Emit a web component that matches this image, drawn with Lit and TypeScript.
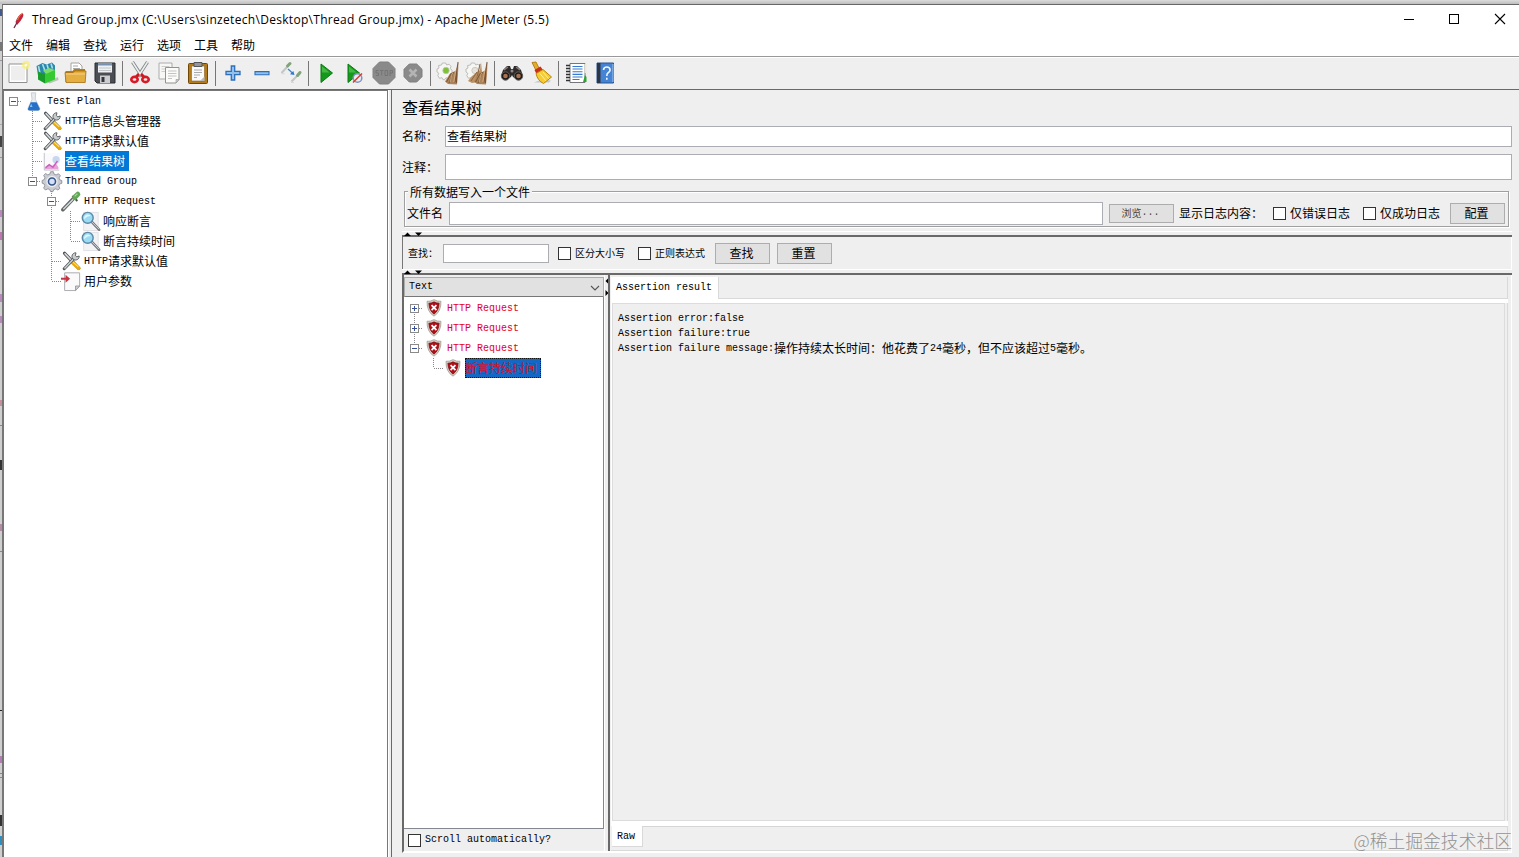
import { LitElement, html, css, svg, nothing } from "lit";
import { customElement, property } from "lit/decorators.js";

/* Shared typography: 10px mono for Latin glyphs, 12px for Chinese glyphs. */
const shared = css`
  * { box-sizing: border-box; }
  .lat { font-family: "Liberation Mono", monospace; font-size: 10px; letter-spacing: 0; white-space: pre; position: relative; top: -2px; }
  .cjk { font-family: "Noto Sans CJK SC", sans-serif; font-size: 12px; white-space: pre; }
`;

const mixed = (text: string) =>
  (text.match(/[\x20-\x7e]+|[^\x20-\x7e]+/g) ?? []).map(
    (part) => html`<span class=${/^[\x20-\x7e]/.test(part) ? "lat" : "cjk"}>${part}</span>`
  );

const wrench = svg`
  <path d="M4 2.5 L19.5 19" stroke="#4e5256" stroke-width="3.6" stroke-linecap="round"/>
  <path d="M4 2.5 L12 11" stroke="#d9dcdc" stroke-width="1.8"/>
  <path d="M12.5 12.5 L19.5 19" stroke="#e9a90d" stroke-width="4" stroke-linecap="round"/>
  <path d="M13 12 L19 17.5" stroke="#ffe069" stroke-width="1.2"/>
  <path d="M3.5 19.5 L15.5 7" stroke="#55595c" stroke-width="3.4" stroke-linecap="round"/>
  <path d="M3.8 19.2 L15.5 7" stroke="#cdd1d2" stroke-width="1.6"/>
  <path d="M20 5.5 A4 4 0 1 1 16.5 2 L15.8 5 L17.4 6.4 Z" fill="#c9cdce" stroke="#55595c" stroke-width="1"/>`;

const lens = svg`
  <path d="M4 1.5h16v20h-16z" fill="#f3f3f6" stroke="#d8d8de" stroke-width=".8"/>
  <path d="M13 12 L21 20.5" stroke="#777b80" stroke-width="3" stroke-linecap="round"/>
  <path d="M13 12 L21 20" stroke="#d5d8db" stroke-width="1"/>
  <circle cx="8.5" cy="7.5" r="6" fill="#9bdcf5" stroke="#5d89a8" stroke-width="1.6"/>
  <path d="M4.5 7 A4.2 4.2 0 0 1 12 5.5 Q8 5 4.5 9z" fill="#dff6ff"/>`;

const broom = (n: number) => svg`
  <path d="M2.5 4.5l3-.5.8-2h3.4l1 2 2.3-.8 2 2.2-.8 2.2 1.8 1.4v3.4l-2 .9.6 2.4-2.4 2-2.2-1-1.5 2H7l-1-2-2.5.6L1.800 14.500l1-2.200-1.800-1.300V8l2-1z" fill="#f6f6f4" stroke="#b5b5b1" stroke-width=".9"/>
  <circle cx="10" cy="9.500" r="3.200" fill=${n ? "#e4e2de" : "#7cc234"} stroke="#c4c4b8" stroke-width=".8"/>
  ${n ? svg`<path d="M16 1l-1 8-8 6-4 5 4 2 7-1 3-9z" fill="#bb9265"/><path d="M15 3l-4 18M12 11l-6 9" stroke="#8a6440" stroke-width="1"/>` : nothing}
  <path d="M22.500.5l-2.500 9-6 3-5 8 3 2.500 9 .5 1-10z" fill="#ad835a"/>
  <path d="M22 1l-3 20.500M17.500 11l-4.500 11M15.500 12l-5 9M20.500 11v11" stroke="#75502f" stroke-width=".9"/>
  <path d="M16.500 12l-2.500 9M19.800 9l-2 12" stroke="#dfbd93" stroke-width=".7"/>`;

const icons: Record<string, unknown> = {
  new: svg`<path d="M3 3h18v18.500H3z" fill="#fff" stroke="#8f9190"/><path d="M5 5h14v14.500H5z" fill="#eeeeef"/><circle cx="20" cy="4" r="4.200" fill="#f8ee77" opacity=".75"/><circle cx="20" cy="4" r="1.500" fill="#fffde0"/>`,
  templates: svg`<path d="M12 21l11-5 .5 3-9 3.500z" fill="#b9c4b9"/><path d="M1.500 5l6-3 4 1.500L17 1.500l3 3v9l-9 6-8-5z" fill="#2d86ab"/><path d="M3.500 5l2 10M7.500 3l2.500 7M12 3.500l1.500 5M16 2.500l1.500 5" stroke="#a8dfe9" stroke-width="1.600"/><path d="M3 10.500l7 2.500v9.500l-7-4z" fill="#199b2c"/><path d="M10 13l10-4v9.500l-10 4z" fill="#35ca32"/><path d="M8 9.500l6-2.500 6 2-9 4z" fill="#7adf67"/>`,
  open: svg`<path d="M7 2h8l3 3v9H7z" fill="#fff" stroke="#a6a39a"/><path d="M9 5h5M9 7.500h7M9 10h7" stroke="#a7a7a3"/><path d="M1.500 10h7l1.500-2h11v13h-19.500z" fill="#b87c12"/><path d="M1 11.500h8l2-1.500h11l-.8 11.500H2z" fill="#e5ae40" stroke="#a66f10" stroke-width=".8"/><path d="M2 13h19" stroke="#f7d285"/>`,
  save: svg`<path d="M2 2h20v20H4l-2-2z" fill="#4b4e53" stroke="#2b2d30"/><path d="M5 2.500h14v9H5z" fill="#eef0f2"/><path d="M5 2.500h14v2H5z" fill="#7692b3"/><path d="M6 7h12M6 9.500h12" stroke="#c2c6ca"/><path d="M7 14.500h10V22H7z" fill="#cbcdd0"/><path d="M8.500 16h3v5h-3z" fill="#34363a"/>`,
  cut: svg`<path d="M4.500 1l9.500 14.500M19.500 1L10 15.500" stroke="#84888a" stroke-width="3.200"/><path d="M4.500 1l9 14M19.500 1l-9 14" stroke="#eef0f0" stroke-width="1.500"/><path d="M11 13l-3 3M13 13l3 3" stroke="#cf1823" stroke-width="3"/><ellipse cx="6.500" cy="18.500" rx="3.200" ry="2.600" fill="#eee" stroke="#d61a26" stroke-width="2.600"/><ellipse cx="17.500" cy="18.500" rx="3.200" ry="2.600" fill="#eee" stroke="#d61a26" stroke-width="2.600"/>`,
  copy: svg`<path d="M2 2h13v16H2z" fill="#f7f7f6" stroke="#aaadab"/><path d="M4.500 5.500h8M4.500 8h8M4.500 10.500h4" stroke="#ccc"/><path d="M8.500 6.500h13.500v12l-3 3.500H8.500z" fill="#fbfbfa" stroke="#90938f"/><path d="M11 10h8.500M11 12.500h8.500M11 15h8.500M11 17.500h4" stroke="#c3c4c2"/><path d="M22 18.500h-3V22z" fill="#ccc" stroke="#999" stroke-width=".6"/>`,
  paste: svg`<path d="M3.500 2.500h17a1 1 0 0 1 1 1v18a1 1 0 0 1-1 1h-17a1 1 0 0 1-1-1v-18a1 1 0 0 1 1-1z" fill="#b37b1a" stroke="#704709"/><path d="M5.500 5h13v15h-13z" fill="#fafafa" stroke="#896021" stroke-width=".6"/><path d="M8 1.500h8v4H8z" fill="#94979a" stroke="#55585b"/><path d="M8 9h8M8 11.500h8M8 14h6M8 16.500h3" stroke="#aaa"/><path d="M18.500 15.500L14 20h4.500z" fill="#bbb"/>`,
  plus: svg`<path d="M10.300 5h3.400v5.300H19v3.400h-5.300V19h-3.400v-5.300H5v-3.400h5.300z" fill="#8fc0ee" stroke="#2f6fba" stroke-width="1.300"/>`,
  minus: svg`<path d="M5 10.600h14v3.200H5z" fill="#8fc0ee" stroke="#2f6fba" stroke-width="1.100"/>`,
  toggle: svg`<path d="M2.500 12L9 5M12.500 20.500l7-7" stroke="#c3c6c6" stroke-width="2"/><path d="M8.500 5l2.500-2.500M18.500 14.500l2.500-3" stroke="#7fa476" stroke-width="3" stroke-linecap="round"/><path d="M2 12.800h4M12 21.500h3" stroke="#dadada"/><path d="M9 8l5 4.500" stroke="#3c86d6" stroke-width="1.300"/><path d="M15.500 14l-4.500-.7 3.300-3.300z" fill="#2c78d0"/>`,
  play: svg`<path d="M7 3L18.500 12 7 21.500z" fill="#15991d" stroke="#0a7b12"/><path d="M8 5.200L15.500 11.500H8z" fill="#44b845"/>`,
  playnow: svg`<path d="M5 3L16.500 12 5 21.500z" fill="#15991d" stroke="#0a7b12"/><path d="M6 5.200L13.500 11.500H6z" fill="#44b845"/><circle cx="14.500" cy="17" r="4.300" fill="#e9eaf2" stroke="#7e93c1" stroke-width="1.500"/><path d="M10 21.500l9-9" stroke="#d5382f" stroke-width="1.500"/>`,
  stop: svg`<path d="M7.500 1h9L23 7.500v9L16.500 23h-9L1 16.500v-9z" fill="#8a8a8a" stroke="#808080"/><path d="M6.500 9.500H4V12h2.500v2.500H4M8 9.500h3.500M9.700 9.500v5M13 9.500h2.700v5H13zM18 15V9.500h2.500V12H18" fill="none" stroke="#747474" stroke-width="1"/>`,
  shutdown: svg`<path d="M8.300 3h7.400L21 8.300v7.400L15.700 21H8.300L3 15.700V8.300z" fill="#8a8a8a" stroke="#808080"/><path d="M8.500 8.500l7 7M15.500 8.500l-7 7" stroke="#b4b4b4" stroke-width="2.600"/>`,
  clear: broom(0),
  clearall: broom(1),
  search: svg`<path d="M3 9l4-4h3l1 3h2l1-3h3l4 4 2 6-5 4-5-3-1-2-1 2-5 3-5-4z" fill="#2d2a29"/><path d="M4 9l4-3M20 9l-4-3" stroke="#8b8582" stroke-width="1.300"/><circle cx="5.500" cy="15" r="4.200" fill="#1e1b1b" stroke="#655e5b"/><circle cx="18.500" cy="15" r="4.200" fill="#1e1b1b" stroke="#655e5b"/><circle cx="5.500" cy="15" r="2.300" fill="#a9704e"/><circle cx="18.500" cy="15" r="2.300" fill="#a9704e"/><circle cx="12" cy="10" r="1.500" fill="#8d8986"/>`,
  sweep: svg`<path d="M5 21.500h15l2-2-9-1z" fill="#aaa" opacity=".6"/><path d="M3 1.500l4-.5 3 6-3 2.500z" fill="#e5ac28" stroke="#a87007" stroke-width=".8"/><path d="M5.500 9l6-3.500 2.500 3.500-6.500 4z" fill="#cb2d1e"/><path d="M7 12.500l7-4 8.500 7.500-8 6.500q-6-3-7.500-10z" fill="#f5cc31" stroke="#b88806"/><path d="M11 12.500l6 7.500M14 11l5.500 6.500" stroke="#fff099"/>`,
  log: svg`<path d="M6 2.500h15v19H6z" fill="#fff" stroke="#74787b"/><path d="M20.500 3h2v9h-2z" fill="#e8e8d4"/><path d="M21 14l1.500 2v5H19z" fill="#2ba531"/><path d="M8.500 5.500h10M8.500 8h10M8.500 10.700h10M8.500 13.400h10M8.500 16h10M8.500 18.500h7" stroke="#357ad0" stroke-width="1.100"/><path d="M2 4.500h4M2 7.500h4M2 10.500h4M2 13.500h4M2 16.500h4M2 19.500h4" stroke="#303236" stroke-width="1.300"/>`,
  help: svg`<path d="M4 2h16.500v20H4z" fill="#4584d4" stroke="#2b548c"/><path d="M4 2h3.500v20H4z" fill="#2c3644"/><path d="M20 3v18" stroke="#a7c8ef"/><path d="M10.500 9q.2-3 3.300-3t3.300 3q0 1.600-1.700 2.500T13.800 15M13.800 16.700v2" fill="none" stroke="#f1f6fd" stroke-width="1.600"/>`,
  flask: svg`<path d="M9 2h5l-.5 7 5 10q.5 2.500-2 2.500h-9q-3 0-2-2.500L10 9z" fill="#e7eaed" stroke="#c7cace"/><path d="M8.500 12.500h6.500l3.500 7q0 2-2 2h-9q-2.500 0-2-2z" fill="#236fc9"/><path d="M9 14l-1.500 3.500h3z" fill="#80c1f4"/>`,
  wrench,
  chart: svg`<path d="M2 2.500h18v17.500H2z" fill="#faf9fc"/><path d="M2.500 2v19H19" fill="none" stroke="#b8b8c0" stroke-width=".9"/><path d="M3 18l4-3.500 4 2 4-3.500 3 5v2H3z" fill="#e3a4da"/><circle cx="15.500" cy="9.500" r="4" fill="#c6d8f0"/><path d="M4 18.500l4-3.500 4 3 5-7" fill="none" stroke="#cf5bbb" stroke-width="1.500"/>`,
  gear: svg`<path d="M9.500.8h3l.8 2.700 2.200.8 2.700-1.300 2 2.200-1.500 2.400.8 2.100 2.300.8v3l-2.500.9-.9 2.100 1.300 2.600-2.200 1.800-2.300-1.300-2.300.9-.9 2.200H9.500l-1-2.300-2.100-.8-2.600 1.300-2-2.200 1.300-2.500-.8-2-2.100-.8v-3l2.200-.9.800-2.100-1.300-2.500 2-2.100L6.400 4.300l2.200-.9z" fill="#c9ccd1" stroke="#83878e" stroke-width=".9"/><circle cx="11" cy="11.500" r="5.500" fill="#36558c" stroke="#eceef1" stroke-width="1.500"/><circle cx="11" cy="11.500" r="3" fill="#d4e1f7"/>`,
  dropper: svg`<path d="M2 20.500L14 8" stroke="#606667" stroke-width="4" stroke-linecap="round"/><path d="M2.500 20L14 8.500" stroke="#d6dad9" stroke-width="1.500"/><path d="M12.500 5.500l5.500 5.500" stroke="#475047" stroke-width="2"/><path d="M15 7l3.500-3.500" stroke="#62a657" stroke-width="5.500" stroke-linecap="round"/><path d="M15 6l3-3" stroke="#a5d695" stroke-width="1.300"/>`,
  lens,
  params: svg`<path d="M4 2h16.500v15l-4.500 4.500H4z" fill="#fafafb" stroke="#a5a5aa"/><path d="M20.500 16.500H16v5z" fill="#d2d2d5" stroke="#999"/><path d="M0 8.500h7" stroke="#c93542" stroke-width="2.200"/><path d="M5 4l5 4.500-5 4.500z" fill="#c93542"/>`,
  shield: svg`<path d="M11 .8q4.500 2.500 8.500 2 .5 12.500-8.500 18.200Q2 15.500 2.500 2.800q4 .5 8.500-2z" fill="#d6d1c8" stroke="#99948b" stroke-width=".9"/><path d="M11 3.500q3.300 1.800 6.300 1.600Q17 14 11 18.500 5 14 4.700 5.100 7.700 5.300 11 3.500z" fill="#b30f18" stroke="#6b0c10" stroke-width=".8"/><path d="M8 7.500l6 6M14 7.500l-6 6" stroke="#fff" stroke-width="2.200"/>`,
};

@customElement("jm-icon")
class JmIcon extends LitElement {
  @property() name = "";
  @property({ type: Number }) size = 24;
  static styles = css`:host { display: block; flex: none; line-height: 0; } svg { display: block; overflow: visible; }`;
  render() {
    const box = this.size === 24 ? "0 0 24 24" : "0 0 22 22";
    return html`<svg width=${this.size} height=${this.size} viewBox=${box} fill="none">${icons[this.name]}</svg>`;
  }
}

interface Node { guides: string; icon: string; label: string; selected?: boolean }

/* Guide codes: space = blank, v = line, t = tee, l = elbow.
   Collapsed expanders: f = line below, m = line on both sides.
   Expanded: - = alone, a = line above, b = line on both sides. */
@customElement("jm-tree")
class JmTree extends LitElement {
  @property({ attribute: false }) nodes: Node[] = [];
  @property({ type: Number }) iconSize = 20;
  static styles = [shared, css`
    :host { display: block; }
    .row { display: flex; height: 20px; align-items: center; }
    .row svg { flex: none; display: block; }
    .ico { width: 19px; display: flex; justify-content: center; flex: none; }
    .label { height: 20px; line-height: 19px; padding-right: 4px; margin-left: 4px; white-space: nowrap; color: #000; }
    .root { margin-left: 5px; }
    .sel { background: #0078d7; color: #fff; }
    .fail .label { color: #e3001f; }
    .fail .sel { background: #1268c4; color: #d1122e; outline: 1px dotted #111; outline-offset: -1px; margin-left: 3px; }
  `];
  guide(code: string) {
    const has = (set: string) => set.includes(code);
    return html`<svg width="19" height="20" viewBox="0 0 19 20" fill="none" shape-rendering="crispEdges">
      ${has("vtlamb") ? svg`<path d="M9.500 0v10" stroke="#888" stroke-dasharray="1 1"/>` : nothing}
      ${has("vtfmb") ? svg`<path d="M9.500 10v10" stroke="#888" stroke-dasharray="1 1"/>` : nothing}
      ${has("tl") ? svg`<path d="M10 10.500h9" stroke="#888" stroke-dasharray="1 1"/>` : nothing}
      ${has("-afmb") ? svg`<path d="M14 10.500h4" stroke="#888" stroke-dasharray="1 1"/>
        <rect x="5.500" y="6.500" width="8" height="8" fill="#fff" stroke="#8a8a8a"/>
        <path d="M7 10.500h5" stroke="#3a4f93"/>${has("fm") ? svg`<path d="M9.500 8v5" stroke="#3a4f93"/>` : nothing}` : nothing}
    </svg>`;
  }
  render() {
    return this.nodes.map((n) => html`<div class="row ${n.icon === "shield" ? "fail" : ""}">
      ${[...n.guides].map((g) => this.guide(g))}
      <span class="ico"><jm-icon .name=${n.icon} .size=${this.iconSize}></jm-icon></span>
      <span class="label ${n.selected ? "sel" : ""} ${n.icon === "flask" ? "root" : ""}">${mixed(n.label)}</span>
    </div>`);
  }
}

@customElement("app-root")
class AppRoot extends LitElement {
  static styles = [shared, css`
    :host { display: block; width: 1519px; height: 857px; overflow: hidden; font-family: "Noto Sans CJK SC", sans-serif; font-size: 12px; color: #000; background: #efefef; }
    .screen { display: grid; grid-template: 4px 853px / 2px 1517px; position: relative; }
    .top { grid-column: 1 / 3; background: linear-gradient(#dcdcdc, #bdbdbd); }
    .edge { background: #cfcfcf; position: relative; }
    .mark { position: absolute; left: 0; width: 2px; }
    .window { border-top: 1px solid #666; border-left: 1px solid #777; display: flex; flex-direction: column; background: #efefef; }
    .title { height: 31px; background: #fff; display: flex; align-items: center; padding-left: 8px; }
    .title svg { display: block; }
    .name { font-family: "Open Sans", sans-serif; font-size: 12px; line-height: 30px; margin-left: 6px; white-space: pre; letter-spacing: 0.305px; flex: 1; padding-bottom: 1px; }
    .ctl { margin-top: -3px; }
    .menu { height: 20px; background: #fff; display: flex; gap: 13px; padding-left: 6px; line-height: 18px; }
    .tools { height: 34px; border-top: 1px solid #999; border-bottom: 1px solid #696969; box-shadow: inset 0 1px #fff; display: flex; align-items: center; }
    .tool { width: 29px; display: flex; justify-content: center; }
    .sep { width: 6px; height: 25px; display: flex; justify-content: center; }
    .sep::before { content: ""; width: 1px; background: #777; }
    .main { display: flex; height: 767px; }
    .left { width: 385px; background: #fff; border: solid #777; border-width: 1px 1px 0 1px; }
    .bar { width: 3px; background: linear-gradient(90deg, #fff 1px, #eee 1px); }
    .right { width: 1128px; border-left: 1px solid #696969; padding-left: 10px; display: flex; flex-direction: column; }
    .head { font-size: 16px; height: 36px; line-height: 34px; }
    .line { display: flex; width: 1110px; }
    .line > .lab { width: 43px; }
    .field { background: #fff; border: 1px solid #abadb3; flex: 1; padding-left: 1px; line-height: 18px; white-space: nowrap; }
    .file { margin: 5px 0 0 2px; width: 1105px; height: 42px; position: relative; display: flex; flex-direction: column; }
    .file::before { content: ""; position: absolute; inset: 6px 0 0 0; border: 1px solid #a0a0a0; box-shadow: inset 1px 1px #fff, 1px 1px #fff; }
    .legend { position: relative; align-self: flex-start; background: #efefef; margin-left: 4px; padding: 0 2px; line-height: 14px; height: 14px; }
    .filebar { position: relative; display: flex; align-items: center; height: 28px; padding: 0 4px 0 3px; margin-top: 1px; white-space: nowrap; }
    .filebar > span:not(.field):not(.btn) { margin-top: -2px; }
    .btn { background: #e1e1e1; border: 1px solid #adadad; height: 21px; line-height: 18px; width: 55px; text-align: center; flex: none; padding-right: 2px; }
    .browse { width: 65px; height: 19px; line-height: 16px; font-size: 10px; margin: 0 5px 0 6px; color: #444; }
    .small { font-size: 10px; white-space: nowrap; margin-top: -2px; }
    .check { width: 13px; height: 13px; border: 1px solid #333; background: #fff; flex: none; margin-right: 4px; }
    .divider { height: 6px; width: 1110px; border-top: 1px solid #fff; border-bottom: 2px solid #696969; }
    .divider svg { display: block; }
    .find { width: 1110px; height: 32px; border-left: 1px solid #777; border-right: 1px solid #fff; display: flex; align-items: center; padding-left: 5px; }
    .body { width: 1110px; height: 578px; display: flex; border-left: 2px solid #696969; border-bottom: 2px solid #fff; border-right: 1px solid #fff; }
    .results { width: 200px; display: flex; flex-direction: column; padding-top: 2px; }
    .combo { height: 20px; border: 1px solid #adadad; border-bottom-color: #777; background: #e1e1e1; display: flex; justify-content: space-between; align-items: center; padding: 2px 3px 0 4px; }
    .list { height: 532px; border: 1px solid #828790; border-width: 0 1px 1px 0; background: #fff; padding: 1px 0 0 1px; }
    .auto { display: flex; align-items: center; height: 22px; padding-left: 4px; }
    .auto .lat { top: -1px; }
    .split { width: 4px; border-left: 1px solid #fff; }
    .split svg { display: block; }
    .view { flex: 1; border-left: 2px solid #696969; padding: 2px 3px 0 1px; display: flex; flex-direction: column; }
    .tabs { height: 22px; display: flex; }
    .tab { background: #fff; width: 108px; padding-left: 5px; line-height: 20px; border-right: 1px solid #d9d9d9; white-space: nowrap; }
    .fill { flex: 1; border-bottom: 1px solid #d9d9d9; border-right: 1px solid #d9d9d9; }
    .pane { height: 527px; border: 1px solid #fff; border-width: 4px 0 5px 1px; border-right: 0; padding-right: 3px; box-shadow: inset -1px 0 #d9d9d9; }
    .text { height: 518px; border: 1px solid #dcdcdc; padding: 6px 0 0 5px; }
    .msg { height: 15px; line-height: 15px; white-space: nowrap; }
    .raw { height: 25px; display: flex; border-bottom: 1px solid #d9d9d9; border-right: 1px solid #d9d9d9; padding-left: 1px; }
    .rawtab { width: 31px; height: 21px; background: #fff; border-right: 1px solid #d9d9d9; border-bottom: 1px solid #d9d9d9; padding-left: 5px; line-height: 19px; }
    .rawfill { flex: 1; border-top: 1px solid #d5d5d5; }
    .water { position: absolute; right: 7px; bottom: 4px; font-size: 17.800px; line-height: 26px; font-family: "Noto Sans CJK SC", sans-serif; font-weight: 300; color: #929292; white-space: nowrap; }
  `];

  tools = ["new", "templates", "open", "save", "|", "cut", "copy", "paste", "|", "plus", "minus", "toggle", "|",
    "play", "playnow", "stop", "shutdown", "|", "clear", "clearall", "|", "search", "sweep", "|", "log", "help"];

  plan: Node[] = [
    { guides: "-", icon: "flask", label: "Test Plan" },
    { guides: " t", icon: "wrench", label: "HTTP信息头管理器" },
    { guides: " t", icon: "wrench", label: "HTTP请求默认值" },
    { guides: " t", icon: "chart", label: "查看结果树", selected: true },
    { guides: " a", icon: "gear", label: "Thread Group" },
    { guides: "  b", icon: "dropper", label: "HTTP Request" },
    { guides: "  vt", icon: "lens", label: "响应断言" },
    { guides: "  vl", icon: "lens", label: "断言持续时间" },
    { guides: "  t", icon: "wrench", label: "HTTP请求默认值" },
    { guides: "  l", icon: "params", label: "用户参数" },
  ];

  results: Node[] = [
    { guides: "f", icon: "shield", label: "HTTP Request" },
    { guides: "m", icon: "shield", label: "HTTP Request" },
    { guides: "a", icon: "shield", label: "HTTP Request" },
    { guides: " l", icon: "shield", label: "断言持续时间", selected: true },
  ];

  marks: [number, number, string][] = [
    [5, 7, "#3e5a91"], [38, 9, "#777"], [56, 1, "#999"], [120, 1, "#aaa"], [132, 11, "#444"], [153, 1, "#999"],
    [206, 7, "#b88abb"], [228, 8, "#bd77b0"], [290, 8, "#b88abb"], [312, 7, "#b88abb"],
    [396, 6, "#c58f9e"], [421, 1, "#888"], [456, 10, "#333"], [520, 7, "#b58aa6"], [547, 1, "#888"],
    [706, 1, "#222"], [752, 7, "#b07fb0"], [769, 1, "#888"], [773, 1, "#888"], [811, 11, "#333"], [832, 9, "#2e8fbf"],
  ];

  arrows() {
    return html`<svg width="24" height="4" viewBox="0 0 24 4"><path d="M2 4l3.500-3.500L9 4zM13 .5h7l-3.500 3.500z" fill="#000"/></svg>`;
  }

  render() {
    return html`<div class="screen" lang="zh-CN">
      <div class="top"></div>
      <div class="edge">${this.marks.map(([y, h, c]) => html`<i class="mark" style="top:${y}px;height:${h}px;background:${c}"></i>`)}</div>
      <div class="window">
        <div class="title">
          <svg width="15" height="18" viewBox="0 0 15 18"><path d="M11.500 1Q14 3 9.500 9L6 13 4.500 10Q7 3 11.500 1z" fill="#c4233c"/><path d="M12 1Q8 3 6.500 8" stroke="#e08a35" fill="none"/><path d="M6 10.500L3 16" stroke="#6d2848" stroke-width="1.300"/></svg>
          <span class="name">Thread Group.jmx (C:\\Users\\sinzetech\\Desktop\\Thread Group.jmx) - Apache JMeter (5.5)</span>
          <svg class="ctl" width="116" height="12" viewBox="0 0 116 12" fill="none" stroke="#000"><path d="M1 6.500h10M46.500 1.500h9v9h-9z" shape-rendering="crispEdges"/><path d="M92 1l10 10M102 1L92 11" stroke-width="1.100"/></svg>
        </div>
        <div class="menu">${["文件", "编辑", "查找", "运行", "选项", "工具", "帮助"].map((m) => html`<span>${m}</span>`)}</div>
        <div class="tools">${this.tools.map((t) => t === "|" ? html`<span class="sep"></span>` : html`<span class="tool"><jm-icon .name=${t} .size=${24}></jm-icon></span>`)}</div>
        <div class="main">
          <div class="left"><jm-tree .nodes=${this.plan}></jm-tree></div>
          <div class="bar"></div>
          <div class="right">
            <div class="head">查看结果树</div>
            <div class="line" style="height:21px;line-height:19px"><span class="lab">名称：</span><span class="field">查看结果树</span></div>
            <div class="line" style="height:26px;line-height:25px;margin-top:7px"><span class="lab">注释：</span><span class="field"></span></div>
            <div class="file">
              <div class="legend">所有数据写入一个文件</div>
              <div class="filebar">
                <span style="width:42px">文件名</span><span class="field" style="height:23px"></span>
                <span class="btn browse">浏览<span class="lat">...</span></span>
                <span style="width:94px">显示日志内容：</span>
                <i class="check"></i><span style="width:73px">仅错误日志</span>
                <i class="check"></i><span style="width:70px">仅成功日志</span><span class="btn">配置</span>
              </div>
            </div>
            <div class="divider" style="margin-top:4px">${this.arrows()}</div>
            <div class="find">
              <span class="small" style="width:35px">查找：</span><span class="field" style="height:19px;flex:none;width:106px;margin-right:9px"></span>
              <i class="check"></i><span class="small" style="width:63px">区分大小写</span>
              <i class="check"></i><span class="small" style="width:59px">正则表达式</span>
              <span class="btn" style="margin:0 7px 0 1px">查找</span><span class="btn">重置</span>
            </div>
            <div class="divider">${this.arrows()}</div>
            <div class="body">
              <div class="results">
                <div class="combo">${mixed("Text")}<svg width="10" height="6" viewBox="0 0 10 6"><path d="M1 1l4 4 4-4" fill="none" stroke="#555" stroke-width="1.100"/></svg></div>
                <div class="list"><jm-tree .nodes=${this.results} .iconSize=${18}></jm-tree></div>
                <div class="auto"><i class="check"></i>${mixed("Scroll automatically?")}</div>
              </div>
              <div class="split"><svg width="4" height="24" viewBox="0 0 4 24"><path d="M3.500 3v6l-3-3zM.5 15v6l3-3z" fill="#000"/></svg></div>
              <div class="view">
                <div class="tabs"><div class="tab">${mixed("Assertion result")}</div><div class="fill"></div></div>
                <div class="pane"><div class="text">
                  ${["Assertion error:false", "Assertion failure:true", "Assertion failure message:操作持续太长时间：他花费了24毫秒，但不应该超过5毫秒。"].map((m) => html`<div class="msg">${mixed(m)}</div>`)}
                </div></div>
                <div class="raw"><div class="rawtab">${mixed("Raw")}</div><div class="rawfill"></div></div>
              </div>
            </div>
          </div>
        </div>
      </div>
      <div class="water">@稀土掘金技术社区</div>
    </div>`;
  }
}
